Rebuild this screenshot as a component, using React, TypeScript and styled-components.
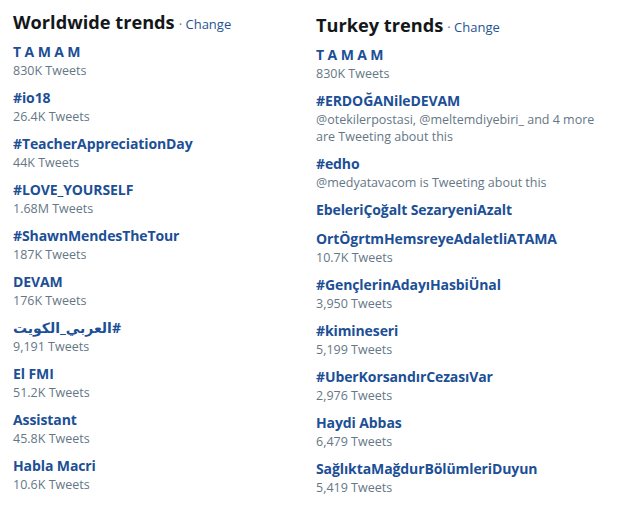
import React from 'react';
import styled, { createGlobalStyle } from 'styled-components';

const GlobalStyle = createGlobalStyle`
  html, body {
    margin: 0;
    padding: 0;
    background: #ffffff;
  }
  body {
    font-family: "Open Sans", "Noto Sans", "DejaVu Sans", sans-serif;
  }
`;

const Page = styled.div`
  display: grid;
  grid-template-columns: 303px 1fr;
  width: 624px;
  height: 517px;
  padding-left: 13px;
  box-sizing: border-box;
`;

const Column = styled.section<{ $offset: number }>`
  display: flex;
  flex-direction: column;
  padding-top: ${(p) => p.$offset}px;
`;

const Header = styled.div`
  display: flex;
  align-items: baseline;
  margin-bottom: 8px;
`;

const Title = styled.h2`
  margin: 0;
  font-size: 18.2px;
  line-height: 24px;
  font-weight: 700;
  color: #14171a;
`;

const Change = styled.a`
  margin-left: 4px;
  font-size: 13px;
  color: #1f5494;
  text-decoration: none;

  &::before {
    content: '· ';
    color: #657786;
  }
`;

const List = styled.ul`
  list-style: none;
  margin: 0;
  padding: 0;
  display: flex;
  flex-direction: column;
  gap: 9px;
`;

const Item = styled.li`
  display: flex;
  flex-direction: column;
  align-items: flex-start;
`;

const Name = styled.a`
  font-size: 14px;
  line-height: 20px;
  font-weight: 700;
  color: #1c4f96;
  text-decoration: none;
  letter-spacing: -0.1px;
`;

const Meta = styled.span`
  font-size: 12.5px;
  line-height: 17px;
  color: #657786;
  max-width: 285px;
`;

type Trend = { name: string; meta?: string };

const worldwide: Trend[] = [
  { name: 'T A M A M', meta: '830K Tweets' },
  { name: '#io18', meta: '26.4K Tweets' },
  { name: '#TeacherAppreciationDay', meta: '44K Tweets' },
  { name: '#LOVE_YOURSELF', meta: '1.68M Tweets' },
  { name: '#ShawnMendesTheTour', meta: '187K Tweets' },
  { name: 'DEVAM', meta: '176K Tweets' },
  { name: '#العربي_الكويت', meta: '9,191 Tweets' },
  { name: 'El FMI', meta: '51.2K Tweets' },
  { name: 'Assistant', meta: '45.8K Tweets' },
  { name: 'Habla Macri', meta: '10.6K Tweets' },
];

const turkey: Trend[] = [
  { name: 'T A M A M', meta: '830K Tweets' },
  { name: '#ERDOĞANileDEVAM', meta: '@otekilerpostasi, @meltemdiyebiri_ and 4 more are Tweeting about this' },
  { name: '#edho', meta: '@medyatavacom is Tweeting about this' },
  { name: 'EbeleriÇoğalt SezaryeniAzalt' },
  { name: 'OrtÖgrtmHemsreyeAdaletliATAMA', meta: '10.7K Tweets' },
  { name: '#GençlerinAdayıHasbiÜnal', meta: '3,950 Tweets' },
  { name: '#kimineseri', meta: '5,199 Tweets' },
  { name: '#UberKorsandırCezasıVar', meta: '2,976 Tweets' },
  { name: 'Haydi Abbas', meta: '6,479 Tweets' },
  { name: 'SağlıktaMağdurBölümleriDuyun', meta: '5,419 Tweets' },
];

const TrendsBlock: React.FC<{ title: string; trends: Trend[]; offset: number }> = ({ title, trends, offset }) => (
  <Column $offset={offset}>
    <Header>
      <Title>{title}</Title>
      <Change href="#">Change</Change>
    </Header>
    <List>
      {trends.map((t) => (
        <Item key={t.name}>
          <Name href="#" dir="auto">{t.name}</Name>
          {t.meta && <Meta>{t.meta}</Meta>}
        </Item>
      ))}
    </List>
  </Column>
);

export default function App() {
  return (
    <>
      <GlobalStyle />
      <Page>
        <TrendsBlock title="Worldwide trends" trends={worldwide} offset={10} />
        <TrendsBlock title="Turkey trends" trends={turkey} offset={13} />
      </Page>
    </>
  );
}
